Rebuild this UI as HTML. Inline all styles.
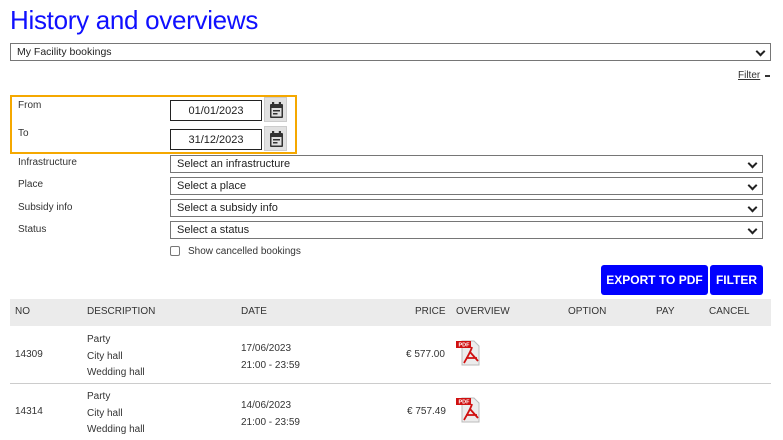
<!DOCTYPE html>
<html><head><meta charset="utf-8"><style>
*{margin:0;padding:0;box-sizing:border-box}
body{width:783px;height:440px;background:#fff;position:relative;overflow:hidden;font-family:"Liberation Sans",sans-serif;color:#333;font-size:10px}
.a{position:absolute;white-space:nowrap}
.sel{position:absolute;border:1px solid #767676;background:#fff;height:18px;font-size:11px;padding:2px 0 0 6px;color:#222}
.sel:after{content:"";position:absolute;right:6px;top:4px;width:5px;height:5px;border-right:2px solid #222;border-bottom:2px solid #222;transform:rotate(45deg)}
.lbl{position:absolute;left:18px;font-size:10px;color:#333}
.di{position:absolute;left:170px;width:92px;height:21px;border:1px solid #222;font-size:11px;text-align:center;padding-top:4px;color:#222}
.cb{position:absolute;left:264px;width:23px;height:25px;background:#e1e1e1;border:1px solid #ccc}
.btn{position:absolute;background:#0000ff;color:#fff;font-weight:bold;font-size:12px;border-radius:3px;text-align:center;padding-top:8px;height:30px;top:265px}
.pdf{position:absolute;width:26px;height:27px}
</style></head><body>
<div class="a" style="left:10px;top:5px;font-size:26px;color:#1010ff;letter-spacing:-0.3px">History and overviews</div>
<div class="sel" style="left:10px;top:43px;width:761px;font-size:10.5px">My Facility bookings</div>
<div class="a" style="left:738px;top:70px;font-size:10px;text-decoration:underline;color:#333">Filter</div>
<div class="a" style="left:765px;top:75px;width:5px;height:2px;background:#333"></div>

<div class="a" style="left:10px;top:95px;width:287px;height:59px;border:2px solid #f5a800"></div>
<div class="lbl" style="top:100px">From</div>
<div class="lbl" style="top:128px">To</div>
<div class="di" style="top:100px">01/01/2023</div>
<div class="di" style="top:129px">31/12/2023</div>
<div class="cb" style="top:97px"><svg width="23" height="25" viewBox="0 0 23 25"><rect x="5" y="6" width="13" height="14" rx="1" fill="#333"/><rect x="7" y="4" width="2.2" height="3" fill="#333"/><rect x="13.8" y="4" width="2.2" height="3" fill="#333"/><rect x="6.5" y="10" width="10" height="8.5" fill="#e1e1e1"/><rect x="8" y="12" width="7" height="1.5" fill="#333"/><rect x="8" y="15" width="4.5" height="1.5" fill="#333"/></svg></div>
<div class="cb" style="top:126px"><svg width="23" height="25" viewBox="0 0 23 25"><rect x="5" y="6" width="13" height="14" rx="1" fill="#333"/><rect x="7" y="4" width="2.2" height="3" fill="#333"/><rect x="13.8" y="4" width="2.2" height="3" fill="#333"/><rect x="6.5" y="10" width="10" height="8.5" fill="#e1e1e1"/><rect x="8" y="12" width="7" height="1.5" fill="#333"/><rect x="8" y="15" width="4.5" height="1.5" fill="#333"/></svg></div>

<div class="lbl" style="top:157px">Infrastructure</div>
<div class="lbl" style="top:179px">Place</div>
<div class="lbl" style="top:202px">Subsidy info</div>
<div class="lbl" style="top:224px">Status</div>
<div class="sel" style="left:170px;top:155px;width:593px">Select an infrastructure</div>
<div class="sel" style="left:170px;top:177px;width:593px">Select a place</div>
<div class="sel" style="left:170px;top:199px;width:593px">Select a subsidy info</div>
<div class="sel" style="left:170px;top:221px;width:593px">Select a status</div>
<div class="a" style="left:170px;top:246px;width:10px;height:10px;border:1px solid #777;border-radius:2px"></div>
<div class="a" style="left:188px;top:246px;font-size:10px">Show cancelled bookings</div>

<div class="btn" style="left:601px;width:107px">EXPORT TO PDF</div>
<div class="btn" style="left:710px;width:53px">FILTER</div>

<div class="a" style="left:10px;top:299px;width:761px;height:27px;background:#ebebeb"></div>
<div class="a" style="left:15px;top:306px">NO</div>
<div class="a" style="left:87px;top:306px">DESCRIPTION</div>
<div class="a" style="left:241px;top:306px">DATE</div>
<div class="a" style="left:415px;top:306px">PRICE</div>
<div class="a" style="left:456px;top:306px">OVERVIEW</div>
<div class="a" style="left:568px;top:306px">OPTION</div>
<div class="a" style="left:656px;top:306px">PAY</div>
<div class="a" style="left:709px;top:306px">CANCEL</div>

<div class="a" style="left:15px;top:349px">14309</div>
<div class="a" style="left:87px;top:332px;line-height:16.5px">Party<br>City hall<br>Wedding hall</div>
<div class="a" style="left:241px;top:340px;line-height:17px">17/06/2023<br>21:00 - 23:59</div>
<div class="a" style="left:406px;top:349px">€ 577.00</div>
<svg class="pdf" style="left:456px;top:339px" viewBox="0 0 26 27"><path d="M6 2h12l5 5v19H6z" fill="#ececec" stroke="#bbb"/><rect x="0" y="2" width="15" height="7" fill="#d01010"/><text x="2.5" y="7.5" font-size="5.5" fill="#fff" font-weight="bold" font-family="Liberation Sans">PDF</text><path d="M8 24c4-7 7-12 8-16M10 19h11M14 13l8 9" stroke="#d01010" stroke-width="1.8" fill="none"/></svg>
<div class="a" style="left:10px;top:383px;width:761px;height:1px;background:#ccc"></div>

<div class="a" style="left:15px;top:406px">14314</div>
<div class="a" style="left:87px;top:389px;line-height:16.5px">Party<br>City hall<br>Wedding hall</div>
<div class="a" style="left:241px;top:397px;line-height:17px">14/06/2023<br>21:00 - 23:59</div>
<div class="a" style="left:407px;top:406px">€ 757.49</div>
<svg class="pdf" style="left:456px;top:396px" viewBox="0 0 26 27"><path d="M6 2h12l5 5v19H6z" fill="#ececec" stroke="#bbb"/><rect x="0" y="2" width="15" height="7" fill="#d01010"/><text x="2.5" y="7.5" font-size="5.5" fill="#fff" font-weight="bold" font-family="Liberation Sans">PDF</text><path d="M8 24c4-7 7-12 8-16M10 19h11M14 13l8 9" stroke="#d01010" stroke-width="1.8" fill="none"/></svg>
</body></html>
